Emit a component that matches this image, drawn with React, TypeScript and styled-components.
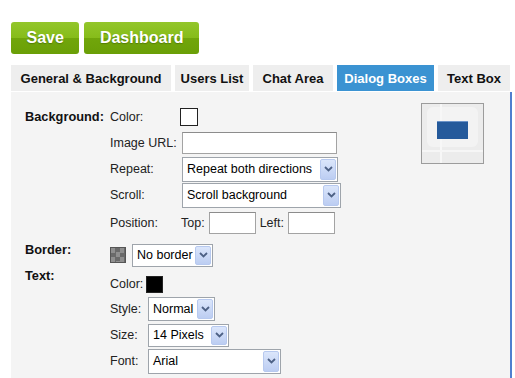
import React from "react";
import styled, { createGlobalStyle } from "styled-components";

const GlobalStyle = createGlobalStyle`
  html, body { margin: 0; padding: 0; background: #ffffff; }
  body { font-family: "Liberation Sans", Arial, sans-serif; color: #111; }
  * { box-sizing: border-box; }
`;

const Page = styled.div`
  padding: 22px 0 0 11px;
`;

const ButtonBar = styled.div`
  display: flex;
  gap: 5px;
`;

const GreenButton = styled.button`
  height: 32px;
  padding: 0 15.5px;
  border: none;
  border-radius: 3px;
  background: linear-gradient(#93c62a 0%, #86bc1a 50%, #71a60b 50%, #6a9f07 100%);
  color: #ffffff;
  font: bold 16px "Liberation Sans", Arial, sans-serif;
  text-shadow: 0 1px 1px rgba(50, 80, 0, 0.45);
  cursor: pointer;
`;

const TabRow = styled.div`
  display: flex;
  gap: 4px;
  margin-top: 11px;
`;

const Tab = styled.div<{ $active?: boolean; $w: number }>`
  width: ${(p) => p.$w}px;
  height: 26px;
  display: flex;
  align-items: center;
  justify-content: center;
  font-weight: bold;
  font-size: 13px;
  background: ${(p) => (p.$active ? "#3b93d2" : "#eeeeee")};
  color: ${(p) => (p.$active ? "#ffffff" : "#111111")};
`;

const Panel = styled.div`
  margin-top: 1px;
  width: 501px;
  min-height: 300px;
  display: flex;
  align-items: flex-start;
  background: #f4f4f4;
  border-right: 2px solid #4f7fcf;
  padding: 12px 0 0 14px;
`;

const Form = styled.div`
  display: flex;
  flex-direction: column;
`;

const Section = styled.div<{ $mt?: number }>`
  display: grid;
  grid-template-columns: 85px auto;
  margin-top: ${(p) => p.$mt ?? 0}px;
`;

const SectionLabel = styled.div<{ $pt: number }>`
  font-weight: bold;
  font-size: 12.8px;
  line-height: 16px;
  padding-top: ${(p) => p.$pt}px;
  color: #111;
`;

const Fields = styled.div<{ $pt?: number }>`
  display: flex;
  flex-direction: column;
  padding-top: ${(p) => p.$pt ?? 0}px;
`;

const Row = styled.div<{ $h: number }>`
  height: ${(p) => p.$h}px;
  display: flex;
  align-items: center;
  font-size: 12.5px;
  color: #222;
`;

const SubLabel = styled.span<{ $w: number }>`
  width: ${(p) => p.$w}px;
  flex: none;
  font-size: 12.5px;
  color: #222;
`;

const InlineLabel = styled.span<{ $ml?: number }>`
  font-size: 12.5px;
  color: #222;
  margin: 0 4px 0 ${(p) => p.$ml ?? 0}px;
`;

const Swatch = styled.span<{ $color: string; $size: number }>`
  width: ${(p) => p.$size}px;
  height: ${(p) => p.$size}px;
  background: ${(p) => p.$color};
  border: 1px solid #222;
  flex: none;
`;

const Checker = styled.span`
  width: 16px;
  height: 16px;
  flex: none;
  margin-right: 6px;
  border: 1px solid #555;
  background-color: #8a8a8a;
  background-image: conic-gradient(#6a6a6a 25%, #8f8f8f 0 50%, #6a6a6a 0 75%, #8f8f8f 0);
  background-size: 9px 9px;
`;

const TextInput = styled.span<{ $w: number }>`
  width: ${(p) => p.$w}px;
  height: 22px;
  background: #ffffff;
  border: 1px solid #a3a3a3;
  border-top-color: #8c8c8c;
  flex: none;
`;

const SelectBox = styled.div<{ $w: number; $h: number }>`
  width: ${(p) => p.$w}px;
  height: ${(p) => p.$h}px;
  display: flex;
  align-items: stretch;
  background: #ffffff;
  border: 1px solid #9ea4ab;
  flex: none;
`;

const SelectText = styled.span`
  flex: 1;
  padding-left: 4px;
  display: flex;
  align-items: center;
  font-size: 12.5px;
  color: #000;
  white-space: nowrap;
  overflow: hidden;
`;

const SelectArrow = styled.span`
  width: 16px;
  margin: 1px;
  display: flex;
  align-items: center;
  justify-content: center;
  background: linear-gradient(#dbe6fb, #bccdf2);
  border: 1px solid #b7c9ef;
  border-radius: 2px;
  flex: none;
`;

const PreviewBox = styled.div`
  margin: -1px 26px 0 auto;
  width: 63px;
  height: 61px;
  flex: none;
  display: flex;
`;

const Chevron = () => (
  <svg width="9" height="6" viewBox="0 0 9 6">
    <path d="M1 1 L4.5 4.5 L8 1" fill="none" stroke="#4d6185" strokeWidth="1.8" />
  </svg>
);

const Select = ({ w, h, value }: { w: number; h: number; value: string }) => (
  <SelectBox $w={w} $h={h}>
    <SelectText>{value}</SelectText>
    <SelectArrow>
      <Chevron />
    </SelectArrow>
  </SelectBox>
);

const tabs = [
  { label: "General & Background", w: 160 },
  { label: "Users List", w: 74 },
  { label: "Chat Area", w: 80 },
  { label: "Dialog Boxes", w: 97, active: true },
  { label: "Text Box", w: 72 },
];

export default function App() {
  return (
    <>
      <GlobalStyle />
      <Page>
        <ButtonBar>
          <GreenButton>Save</GreenButton>
          <GreenButton>Dashboard</GreenButton>
        </ButtonBar>
        <TabRow>
          {tabs.map((t) => (
            <Tab key={t.label} $w={t.w} $active={t.active}>
              {t.label}
            </Tab>
          ))}
        </TabRow>
        <Panel>
          <Form>
            <Section>
              <SectionLabel $pt={5}>Background:</SectionLabel>
              <Fields>
                <Row $h={26}>
                  <SubLabel $w={70}>Color:</SubLabel>
                  <Swatch $color="#ffffff" $size={18} />
                </Row>
                <Row $h={26}>
                  <SubLabel $w={72}>Image URL:</SubLabel>
                  <TextInput $w={155} />
                </Row>
                <Row $h={26}>
                  <SubLabel $w={72}>Repeat:</SubLabel>
                  <Select w={156} h={25} value="Repeat both directions" />
                </Row>
                <Row $h={26}>
                  <SubLabel $w={72}>Scroll:</SubLabel>
                  <Select w={159} h={25} value="Scroll background" />
                </Row>
                <Row $h={30}>
                  <SubLabel $w={71}>Position:</SubLabel>
                  <InlineLabel>Top:</InlineLabel>
                  <TextInput $w={47} />
                  <InlineLabel $ml={4}>Left:</InlineLabel>
                  <TextInput $w={47} />
                </Row>
              </Fields>
            </Section>
            <Section $mt={2}>
              <SectionLabel $pt={2}>Border:</SectionLabel>
              <Fields $pt={2}>
                <Row $h={26}>
                  <Checker />
                  <Select w={81} h={23} value="No border" />
                </Row>
              </Fields>
            </Section>
            <Section>
              <SectionLabel $pt={0}>Text:</SectionLabel>
              <Fields $pt={4}>
                <Row $h={24}>
                  <SubLabel $w={36}>Color:</SubLabel>
                  <Swatch $color="#000000" $size={17} />
                </Row>
                <Row $h={26}>
                  <SubLabel $w={38}>Style:</SubLabel>
                  <Select w={67} h={24} value="Normal" />
                </Row>
                <Row $h={26}>
                  <SubLabel $w={38}>Size:</SubLabel>
                  <Select w={81} h={23} value="14 Pixels" />
                </Row>
                <Row $h={26}>
                  <SubLabel $w={38}>Font:</SubLabel>
                  <Select w={133} h={25} value="Arial" />
                </Row>
              </Fields>
            </Section>
          </Form>
          <PreviewBox>
            <svg width="63" height="61" viewBox="0 0 63 61">
              <rect x="0.5" y="0.5" width="62" height="60" fill="#ececec" stroke="#9c9c9c" />
              <rect x="6" y="4" width="51" height="40" rx="6" fill="#f3f3f3" />
              <rect x="19" y="1" width="2" height="59" fill="#f7f7f7" />
              <rect x="1" y="47" width="61" height="2" fill="#f6f6f6" />
              <rect x="16" y="18" width="31" height="18" fill="#255a9b" />
              <rect x="16" y="18" width="31" height="1" fill="#6b93c8" />
            </svg>
          </PreviewBox>
        </Panel>
      </Page>
    </>
  );
}
